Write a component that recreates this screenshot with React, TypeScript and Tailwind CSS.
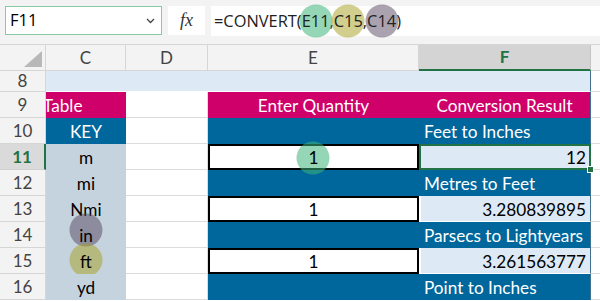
import React from "react";

const PINK = "bg-[#d0006b]";
const BLUE = "bg-[#00679d]";

function Circle({ color, extra }: { color: string; extra?: string }) {
  return (
    <span
      className={`absolute left-1/2 top-1/2 -translate-x-1/2 -translate-y-1/2 w-[33px] h-[33px] rounded-full ${color} ${extra ?? ""}`}
    />
  );
}

function Ref({ text, color }: { text: string; color: string }) {
  return (
    <span className="relative inline-block">
      <Circle color={color} />
      <span className="relative">{text}</span>
    </span>
  );
}

const GREEN_C = "bg-[rgba(60,180,120,0.55)]";
const YELLOW_C = "bg-[rgba(165,160,30,0.5)]";
const GRAY_C = "bg-[rgba(85,70,95,0.5)]";

function RowHead({ n, sel }: { n: number; sel?: boolean }) {
  return (
    <div
      className={
        sel
          ? "flex items-center justify-center bg-[#dadada] border-b border-[#cfcfcf] border-r-2 border-r-[#217346] text-[#217346] font-bold text-[17px]"
          : "flex items-center justify-center bg-[#f3f3f3] border-b border-[#d6d6d6] border-r border-r-[#d6d6d6] text-[#444] text-[17px]"
      }
    >
      {n}
    </div>
  );
}

const cellText = "text-[17.2px] leading-none pt-[2px]";

export default function App() {
  const keys = ["m", "mi", "Nmi", "in", "ft", "yd"];
  const fTitles: Record<number, string> = {
    12: "Metres to Feet",
    14: "Parsecs to Lightyears",
    16: "Point to Inches",
  };
  const fVals: Record<number, string> = {
    13: "3.280839895",
    15: "3.261563777",
  };
  return (
    <div
      className="w-[600px] h-[301px] overflow-hidden bg-white text-black"
      style={{ fontFamily: "Lato, 'Noto Sans', sans-serif" }}
    >
      {/* formula bar */}
      <div className="h-[45px] bg-[#f3f3f3] border-b border-[#d6d6d6] flex items-start pt-[6px] pl-[5px] gap-[6px]">
        <div
          className="w-[157px] h-[29px] bg-white border border-[#86c9a3] flex items-center justify-between pl-[4px] pr-[6px] text-[16.5px]"
          style={{ fontFamily: "'Open Sans', sans-serif" }}
        >
          <span>F11</span>
          <svg width="9" height="6" viewBox="0 0 9 6">
            <path d="M1 1l3.5 3.5L8 1" stroke="#444" strokeWidth="1.3" fill="none" />
          </svg>
        </div>
        <div className="w-[37px] h-[29px] bg-white flex items-center justify-center">
          <span
            className="italic text-[18px] text-[#333]"
            style={{ fontFamily: "'Liberation Serif', serif" }}
          >
            fx
          </span>
        </div>
        <div
          className="flex-1 h-[30px] bg-white flex items-center pl-[3px] text-[16.4px] text-[#222]"
          style={{ fontFamily: "'Open Sans', sans-serif" }}
        >
          <span>=CONVERT(</span>
          <Ref text="E11" color={GREEN_C} />
          <span>,</span>
          <Ref text="C15" color={YELLOW_C} />
          <span>,</span>
          <Ref text="C14" color={GRAY_C} />
          <span>)</span>
        </div>
      </div>

      {/* sheet */}
      <div className="grid grid-cols-[46px_80px_82px_211px_172px_1fr] grid-rows-[26px_21px_repeat(8,26px)]">
        {/* header row */}
        <div className="bg-[#f3f3f3] border-r border-b border-[#d6d6d6] relative">
          <svg className="absolute right-[3px] bottom-[3px]" width="18" height="16" viewBox="0 0 18 16">
            <path d="M18 0V16H0Z" fill="#b8b8b8" />
          </svg>
        </div>
        {["C", "D", "E"].map((c) => (
          <div
            key={c}
            className="bg-[#f3f3f3] border-r border-b border-[#d6d6d6] flex items-center justify-center text-[17px] text-[#444]"
          >
            {c}
          </div>
        ))}
        <div className="bg-[#d4d4d4] border-r border-[#c4c4c4] border-b-2 border-b-[#217346] flex items-center justify-center text-[17px] font-bold text-[#217346]">
          F
        </div>
        <div className="bg-[#f3f3f3] border-b border-[#d6d6d6]" />

        {/* row 8 */}
        <RowHead n={8} />
        <div className="col-span-4 bg-[#dde9f5] border-r border-r-[#42718f] border-b border-b-white" />
        <div className="border-b border-[#dcdcdc]" />

        {/* row 9 */}
        <RowHead n={9} />
        <div className={`${PINK} overflow-hidden flex items-center text-white ${cellText}`}>
          <span className="ml-[-3px] whitespace-nowrap">Table</span>
        </div>
        <div className="border-r border-b border-[#dcdcdc]" />
        <div className={`${PINK} flex items-center justify-center text-white ${cellText}`}>Enter Quantity</div>
        <div className={`${PINK} flex items-center justify-center text-white border-r border-r-[#42718f] ${cellText}`}>
          Conversion Result
        </div>
        <div className="border-b border-[#dcdcdc]" />

        {/* row 10 */}
        <RowHead n={10} />
        <div className={`${BLUE} flex items-center justify-center text-white ${cellText}`}>KEY</div>
        <div className="border-r border-b border-[#dcdcdc]" />
        <div className={`${BLUE}`} />
        <div className={`${BLUE} flex items-center pl-[5px] text-white border-r border-r-[#42718f] ${cellText}`}>
          Feet to Inches
        </div>
        <div className="border-b border-[#dcdcdc]" />

        {[11, 12, 13, 14, 15, 16].map((r, i) => {
          const odd = r % 2 === 1;
          const key = keys[i];
          return (
            <React.Fragment key={r}>
              <RowHead n={r} sel={r === 11} />
              <div className={`bg-[#c5d3df] relative flex items-center justify-center ${cellText}`}>
                {r === 14 && <Circle color={GRAY_C} extra="mt-[-5px]" />}
                {r === 15 && <Circle color={YELLOW_C} extra="mt-[-1px]" />}
                <span className="relative">{key}</span>
              </div>
              <div className="border-r border-b border-[#dcdcdc]" />
              {odd ? (
                <div className={`bg-white border-2 border-black relative flex items-center justify-center ${cellText}`}>
                  {r === 11 ? (
                    <Ref text="1" color={GREEN_C} />
                  ) : (
                    <span>1</span>
                  )}
                </div>
              ) : (
                <div className={BLUE} />
              )}
              {r === 11 ? (
                <div className={`relative bg-[#dde9f5] border-2 border-[#217346] flex items-center justify-end pr-[3px] ${cellText}`}>
                  12
                  <span className="absolute right-[-5px] bottom-[-5px] w-[7px] h-[7px] bg-[#217346] border border-white" />
                </div>
              ) : odd ? (
                <div className={`bg-[#dde9f5] border-r border-r-[#42718f] border-l-2 border-l-white border-b border-b-white flex items-center justify-end pr-[4px] ${cellText}`}>
                  {fVals[r]}
                </div>
              ) : (
                <div className={`${BLUE} border-r border-r-[#42718f] flex items-center pl-[5px] text-white ${cellText}`}>
                  {fTitles[r]}
                </div>
              )}
              <div className="border-b border-[#dcdcdc]" />
            </React.Fragment>
          );
        })}
      </div>
    </div>
  );
}
